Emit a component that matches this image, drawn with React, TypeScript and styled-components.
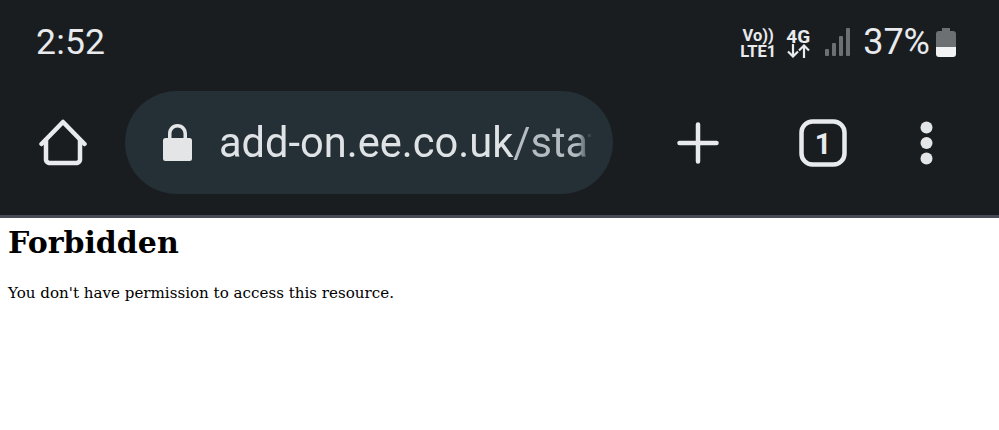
import React from 'react';
import styled, { createGlobalStyle } from 'styled-components';

const GlobalStyle = createGlobalStyle`
  html, body {
    margin: 0;
    padding: 0;
    background: #fff;
  }
`;

const Page = styled.div`
  width: 999px;
  height: 430px;
  overflow: hidden;
  background: #fff;
`;

const Chrome = styled.header`
  height: 215px;
  background: #1a1d20;
  border-bottom: 3px solid #484a56;
  font-family: Roboto, 'Liberation Sans', sans-serif;
  color: #e8eaed;
`;

const StatusBar = styled.div`
  height: 91px;
  padding: 0 43px 7px 36px;
  box-sizing: border-box;
  display: flex;
  align-items: center;
  justify-content: space-between;
`;

const Clock = styled.div`
  font-size: 35.5px;
  line-height: 42px;
  letter-spacing: 0.2px;
`;

const StatusIcons = styled.div`
  display: flex;
  align-items: center;
`;

const NetLabel = styled.div<{ $size: number; $gap: number }>`
  display: flex;
  flex-direction: column;
  align-items: center;
  font-size: ${(p) => p.$size}px;
  line-height: 15.5px;
  font-weight: 700;
  margin: 3px ${(p) => p.$gap}px 0 0;
  white-space: nowrap;
`;

const SignalWrap = styled.div`
  display: flex;
  margin-left: 5px;
`;

const Percent = styled.div`
  font-size: 36px;
  line-height: 42px;
  margin: 0 6px 0 12px;
`;

const Toolbar = styled.div`
  height: 124px;
  padding: 0 0 21px 39px;
  box-sizing: border-box;
  display: flex;
  align-items: center;
`;

const UrlPill = styled.div`
  width: 488px;
  height: 103px;
  margin-left: 38px;
  padding: 0 21px 0 38px;
  box-sizing: border-box;
  border-radius: 52px;
  background: #242f36;
  display: flex;
  align-items: center;
  flex-shrink: 0;
`;

const UrlText = styled.div`
  margin-left: 27px;
  flex: 1;
  overflow: hidden;
  white-space: nowrap;
  font-size: 41.6px;
  line-height: 48px;
  color: #dfe3e6;
  mask-image: linear-gradient(to right, #000 96%, transparent 100%);
`;

const Path = styled.span`
  color: #b4bcc1;
`;

const ToolIcon = styled.svg<{ $gap: number }>`
  margin-left: ${(p) => p.$gap}px;
  flex-shrink: 0;
  display: block;
`;

const Content = styled.main`
  padding: 7px 8px 0;
  font-family: 'DejaVu Serif', 'Liberation Serif', serif;
  color: #000;
`;

const Title = styled.h1`
  margin: 0;
  font-size: 30px;
  line-height: 36px;
  font-weight: 700;
`;

const Message = styled.p`
  margin: 21px 0 0;
  font-size: 15.1px;
  line-height: 22px;
`;

const SignalIcon = () => (
  <svg width="26" height="30" viewBox="0 0 26 30" fill="#6d7073">
    <rect x="0" y="22" width="4" height="7" rx="1" />
    <rect x="7" y="16" width="4" height="13" rx="1" />
    <rect x="14" y="9" width="4" height="20" rx="1" />
    <rect x="21" y="1" width="4" height="28" rx="1" />
  </svg>
);

const BatteryIcon = () => (
  <svg width="20" height="30" viewBox="0 0 20 30">
    <path d="M6 1h8v3h3a3 3 0 0 1 3 3v13H0V7a3 3 0 0 1 3-3h3z" fill="#6d7073" />
    <path d="M0 20h20v7a3 3 0 0 1-3 3H3a3 3 0 0 1-3-3z" fill="#f1f2f3" />
  </svg>
);

const ArrowsIcon = () => (
  <svg width="23" height="14" viewBox="0 0 23 14" fill="none" stroke="#e8eaed" strokeWidth="2.2">
    <path d="M6 0v12M1 7.5l5 5 5-5" />
    <path d="M17 14V2M12 6.5l5-5 5 5" />
  </svg>
);

const App = () => (
  <Page>
    <GlobalStyle />
    <Chrome>
      <StatusBar>
        <Clock>2:52</Clock>
        <StatusIcons>
          <NetLabel $size={16.5} $gap={10}>
            <span>Vo))</span>
            <span>LTE1</span>
          </NetLabel>
          <NetLabel $size={19} $gap={10}>
            <span>4G</span>
            <ArrowsIcon />
          </NetLabel>
          <SignalWrap>
            <SignalIcon />
          </SignalWrap>
          <Percent>37%</Percent>
          <BatteryIcon />
        </StatusIcons>
      </StatusBar>
      <Toolbar>
        <svg width="48" height="48" viewBox="0 0 48 48" fill="none" stroke="#e8eaed" strokeWidth="4.5" strokeLinejoin="round" strokeLinecap="round">
          <path d="M2.5 25 24 3l21.500 22" />
          <path d="M7 21v20a4 4 0 0 0 3 3h28a4 4 0 0 0 3-3V21" />
        </svg>
        <UrlPill>
          <svg width="29" height="37" viewBox="0 0 29 37" fill="#e4e5e7">
            <path d="M14.500 0C8.500 0 5 4.500 5 10v4H2.500A2.500 2.500 0 0 0 0 16.500v18A2.500 2.500 0 0 0 2.500 37h24a2.500 2.500 0 0 0 2.500-2.500v-18a2.500 2.500 0 0 0-2.500-2.500H24v-4c0-5.500-3.500-10-9.500-10zm0 3.500c3.800 0 6 3 6 6.500v4h-12v-4c0-3.500 2.200-6.500 6-6.500z" />
          </svg>
          <UrlText>
            add-on.ee.co.uk<Path>/static/forbidden</Path>
          </UrlText>
        </UrlPill>
        <ToolIcon $gap={64} width="42" height="42" viewBox="0 0 42 42" stroke="#e8eaed" strokeWidth="4.5" strokeLinecap="round">
          <path d="M21 2.500v37M2.500 21h37" />
        </ToolIcon>
        <ToolIcon $gap={80} width="48" height="48" viewBox="0 0 48 48">
          <rect x="2.500" y="2.500" width="43" height="43" rx="11" fill="none" stroke="#e8eaed" strokeWidth="4.500" />
          <text x="24" y="34.500" textAnchor="middle" fontFamily="Roboto, sans-serif" fontSize="29" fontWeight="700" fill="#e8eaed">1</text>
        </ToolIcon>
        <ToolIcon $gap={73} width="13" height="44" viewBox="0 0 13 44" fill="#e4e5e7">
          <circle cx="6.500" cy="6.500" r="6" />
          <circle cx="6.500" cy="22" r="6" />
          <circle cx="6.500" cy="37.500" r="6" />
        </ToolIcon>
      </Toolbar>
    </Chrome>
    <Content>
      <Title>Forbidden</Title>
      <Message>You don't have permission to access this resource.</Message>
    </Content>
  </Page>
);

export default App;
